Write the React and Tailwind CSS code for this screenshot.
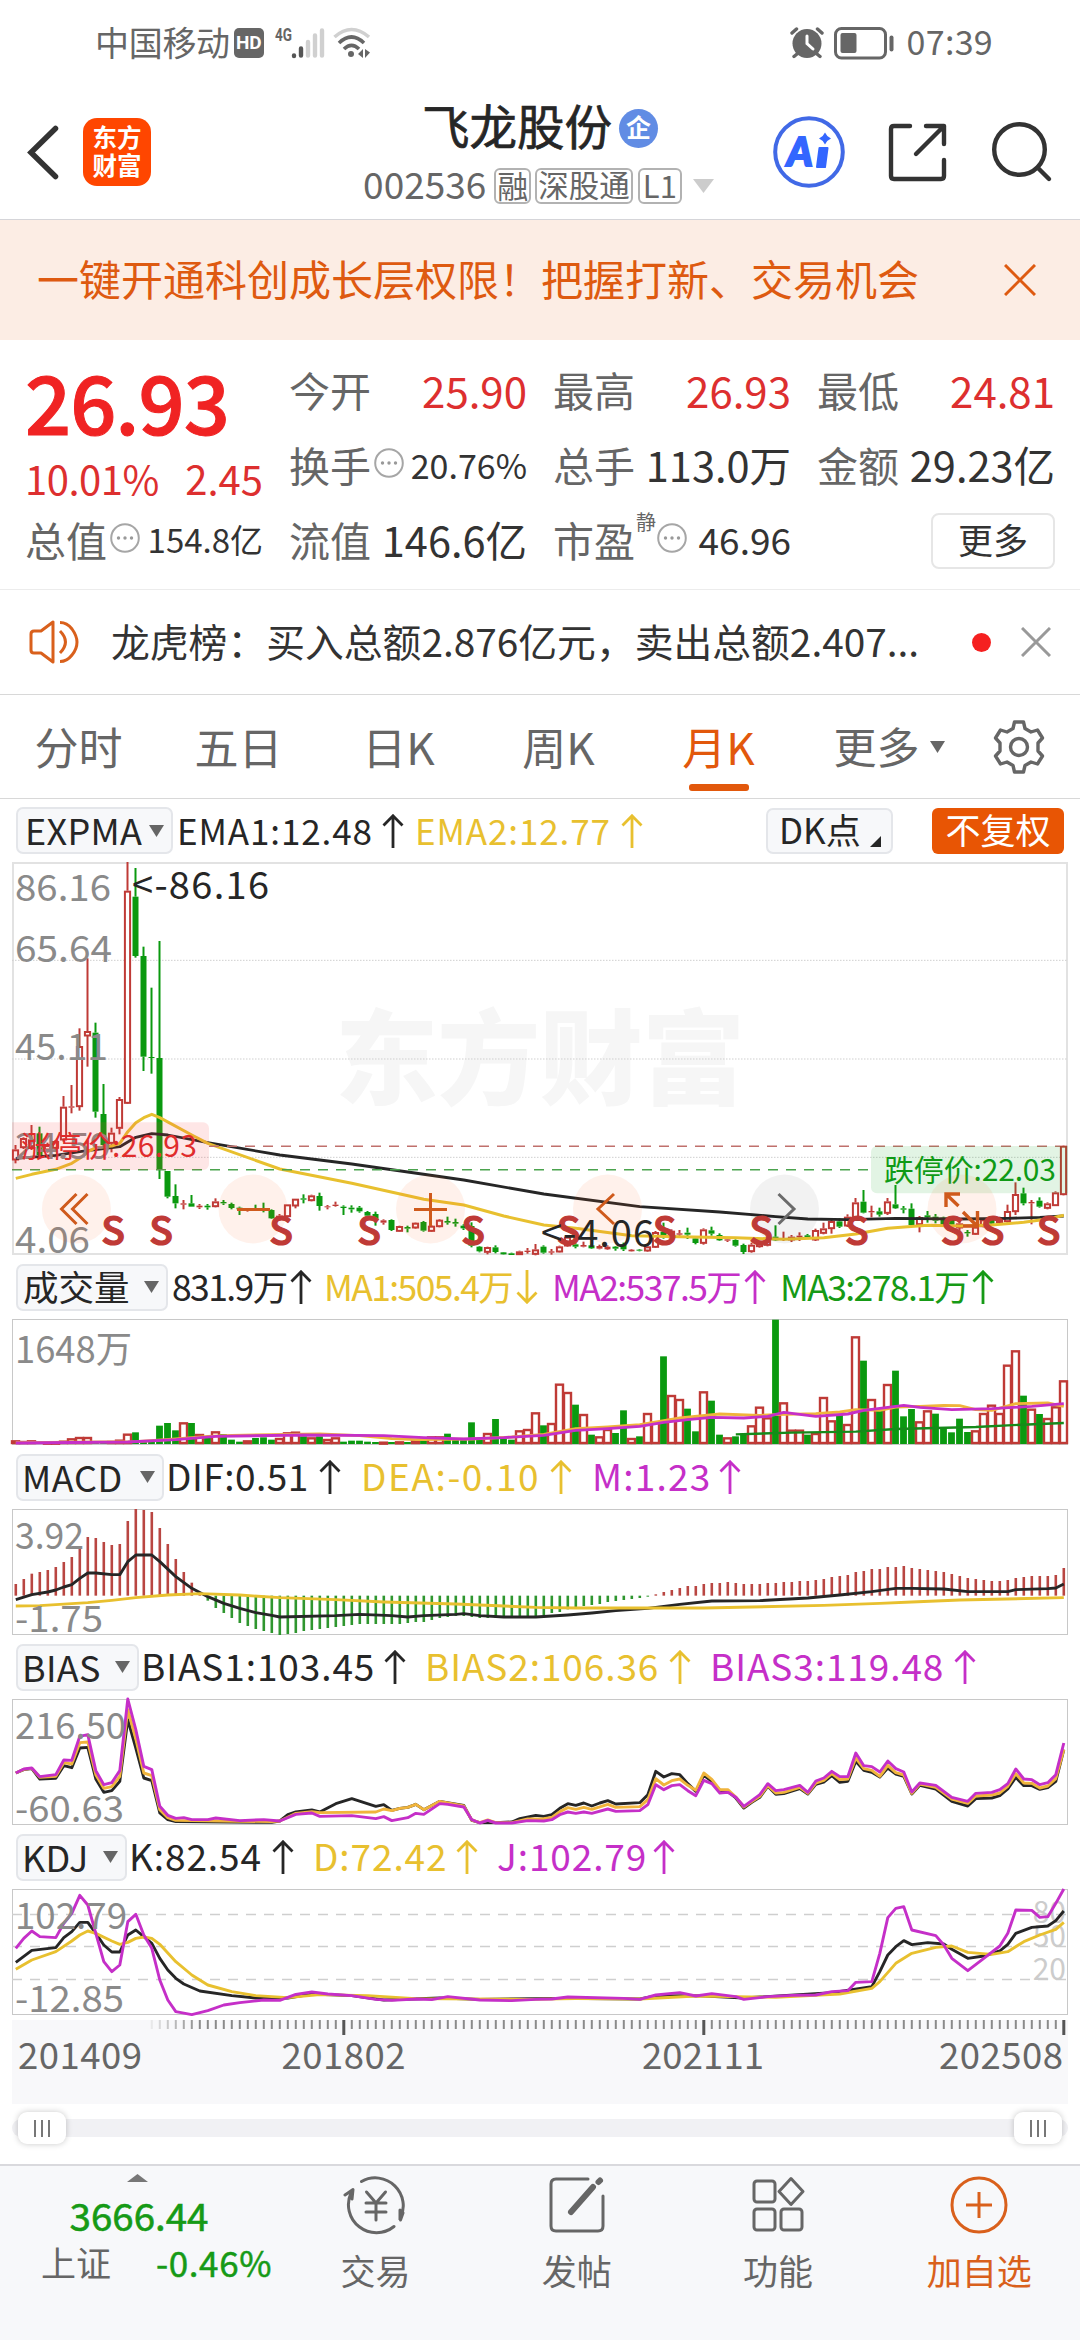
import { useState } from "react";

const MONTHS = 132;
const px = (i) => 15.8 + i * 8;
// series values are kept in third-of-a-pixel steps, measured from the panel offset
const from = (top) => (v) => (v - top) / 3;

const RED = "#bf3a36";
const GREEN = "#0a990f";
const GOLD = "#e8c02f";
const INK = "#262626";
const PINK = "#c52fc8";

// [up, high, bodyTop, bodyBottom, low]
const CANDLES = [
  [1, 885, 898, 930, 940], [1, 862, 864, 893, 897], [1, 825, 868, 890, 900], [0, 830, 850, 915, 918],
  [1, 878, 885, 900, 908], [1, 870, 873, 895, 900], [1, 738, 770, 870, 875], [1, 705, 769, 773, 790],
  [1, 535, 588, 770, 782], [1, 325, 543, 558, 650], [0, 518, 548, 785, 803], [0, 702, 792, 885, 890],
  [1, 833, 848, 880, 907], [1, 741, 747, 835, 853], [1, 36, 122, 760, 762], [0, 54, 140, 318, 323],
  [0, 290, 318, 620, 663], [0, 413, 621, 624, 671], [0, 273, 624, 958, 987], [0, 963, 963, 1040, 1045],
  [0, 1003, 1038, 1060, 1075], [1, 1050, 1060, 1064, 1078], [0, 1035, 1060, 1070, 1070], [1, 1062, 1067, 1072, 1077],
  [0, 1062, 1067, 1072, 1079], [1, 1045, 1054, 1070, 1072], [0, 1050, 1056, 1060, 1065], [0, 1058, 1062, 1074, 1078],
  [0, 1070, 1073, 1078, 1095], [1, 1076, 1078, 1082, 1085], [0, 1064, 1076, 1081, 1083], [0, 1058, 1074, 1080, 1087],
  [0, 1078, 1080, 1105, 1107], [1, 1092, 1097, 1108, 1112], [1, 1063, 1063, 1100, 1102], [1, 1046, 1046, 1068, 1075],
  [0, 1033, 1045, 1049, 1060], [1, 1034, 1036, 1052, 1054], [0, 1028, 1038, 1068, 1082], [1, 1065, 1069, 1072, 1078],
  [1, 1055, 1064, 1068, 1070], [0, 1066, 1070, 1074, 1095], [0, 1066, 1073, 1078, 1088], [0, 1068, 1073, 1084, 1088],
  [0, 1083, 1086, 1097, 1099], [0, 1085, 1092, 1110, 1127], [1, 1108, 1111, 1118, 1124], [0, 1108, 1110, 1140, 1143],
  [1, 1127, 1128, 1144, 1145], [0, 1127, 1131, 1136, 1147], [1, 1117, 1118, 1134, 1136], [0, 1113, 1116, 1142, 1145],
  [1, 1125, 1127, 1144, 1146], [1, 1107, 1109, 1130, 1132], [0, 1100, 1113, 1118, 1124], [0, 1106, 1116, 1121, 1130],
  [0, 1123, 1127, 1135, 1140], [0, 1117, 1128, 1187, 1192], [0, 1188, 1190, 1204, 1207], [1, 1190, 1191, 1207, 1213],
  [0, 1186, 1192, 1206, 1210], [0, 1206, 1207, 1213, 1214], [0, 1208, 1210, 1215, 1215], [1, 1202, 1204, 1214, 1215],
  [1, 1194, 1202, 1206, 1211], [1, 1182, 1198, 1213, 1216], [0, 1186, 1190, 1208, 1211], [1, 1197, 1204, 1208, 1214],
  [1, 1187, 1189, 1206, 1207], [1, 1155, 1160, 1188, 1190], [0, 1178, 1183, 1190, 1195], [1, 1175, 1185, 1190, 1192],
  [0, 1183, 1186, 1195, 1197], [1, 1184, 1188, 1196, 1198], [1, 1186, 1190, 1198, 1200], [0, 1188, 1190, 1196, 1202],
  [0, 1178, 1183, 1198, 1203], [1, 1197, 1199, 1204, 1205], [0, 1197, 1199, 1202, 1204], [1, 1186, 1189, 1203, 1205],
  [1, 1143, 1146, 1192, 1194], [0, 1118, 1145, 1162, 1166], [1, 1138, 1142, 1163, 1165], [1, 1140, 1150, 1154, 1162],
  [0, 1133, 1148, 1154, 1167], [0, 1160, 1165, 1179, 1183], [1, 1135, 1138, 1180, 1184], [0, 1130, 1141, 1151, 1157],
  [0, 1150, 1155, 1171, 1173], [1, 1165, 1168, 1172, 1176], [0, 1168, 1170, 1187, 1190], [0, 1181, 1185, 1206, 1212],
  [1, 1178, 1184, 1205, 1208], [1, 1174, 1178, 1190, 1193], [1, 1163, 1166, 1186, 1189], [0, 1126, 1160, 1171, 1173],
  [1, 1145, 1166, 1170, 1173], [1, 1155, 1160, 1170, 1176], [1, 1147, 1157, 1162, 1173], [0, 1152, 1156, 1163, 1166],
  [1, 1136, 1140, 1170, 1173], [1, 1118, 1135, 1150, 1153], [1, 1110, 1113, 1136, 1151], [0, 1105, 1114, 1130, 1134],
  [1, 1093, 1100, 1128, 1131], [1, 1044, 1057, 1107, 1109], [0, 1020, 1055, 1088, 1090], [1, 1067, 1083, 1087, 1102],
  [0, 1073, 1084, 1094, 1100], [1, 1044, 1054, 1090, 1095], [0, 1005, 1063, 1075, 1077], [0, 1068, 1075, 1079, 1090],
  [0, 1060, 1076, 1125, 1128], [1, 1098, 1101, 1124, 1147], [0, 1083, 1096, 1102, 1118], [0, 1092, 1100, 1112, 1120],
  [0, 1100, 1103, 1124, 1130], [0, 1105, 1110, 1124, 1128], [1, 1110, 1120, 1134, 1142], [0, 1140, 1146, 1150, 1160],
  [1, 1118, 1130, 1153, 1155], [1, 1104, 1108, 1130, 1132], [0, 1103, 1105, 1121, 1125], [1, 1100, 1106, 1118, 1120],
  [1, 1064, 1083, 1115, 1118], [1, 997, 1032, 1085, 1095], [0, 1013, 1030, 1060, 1066], [1, 1050, 1056, 1060, 1123],
  [0, 1042, 1052, 1070, 1073], [1, 1057, 1060, 1075, 1078], [1, 1024, 1027, 1067, 1068], [1, 886, 887, 1034, 1036],
];

// bar tops, negative for a falling month
const VOLUME = [
  542, 544, 542, -546, 546, 546, 543, 536, 532, 532, -545, -546, 544, 540, 522, -518, -542, -545, -498, -490,
  -512, 488, -490, 523, -533, 515, -523, -540, -546, 542, -535, -533, -540, 535, 518, 516, -530, 533, -530, 538,
  533, -546, -543, -543, -546, -547, 546, -547, 545, -547, 540, -543, 530, 530, -522, -540, -540, -488, -540, 520,
  -478, -535, -540, 512, 508, 458, -497, 490, 372, 397, -435, 463, -525, 530, 508, -520, -452, 535, -530, 460,
  487, -290, 406, 418, -447, -515, 395, -423, -525, 533, -530, -522, 497, 441, 473, -180, 428, 510, 510, -525,
  520, 412, 482, -465, 493, 230, -303, 418, -450, 373, -333, -470, -448, 485, 452, -462, -503, -518, -477, -517,
  512, 460, 435, 460, 315, 272, -408, 447, -463, 475, 440, 362,
];

// histogram tips around the 1007 zero line
const MACD = [
  972, 957, 941, 936, 930, 921, 906, 891, 866, 831, 834, 846, 855, 852, 783, 747, 750, 756, 804, 852,
  897, 936, 968, 1000, 1022, 1044, 1059, 1074, 1089, 1098, 1107, 1113, 1119, 1125, 1122, 1119, 1113, 1110, 1107, 1104,
  1101, 1098, 1095, 1092, 1092, 1092, 1092, 1092, 1092, 1089, 1086, 1086, 1080, 1074, 1071, 1068, 1068, 1071, 1074, 1074,
  1074, 1074, 1074, 1074, 1074, 1074, 1065, 1059, 1056, 1048, 1041, 1038, 1035, 1032, 1026, 1023, 1020, 1017, 1014, 1010,
  1003, 996, 990, 984, 978, 978, 972, 969, 969, 966, 969, 972, 972, 972, 969, 969, 966, 966, 963, 963,
  960, 957, 951, 948, 945, 936, 933, 927, 927, 921, 921, 918, 924, 927, 930, 933, 936, 942, 948, 954,
  957, 960, 963, 963, 960, 954, 951, 948, 948, 948, 945, 924,
];

const EMA1 = [[0, 925], [5, 916], [8, 905], [13, 890], [15, 862], [17, 851], [19, 855], [24, 878], [33, 915], [42, 942], [56, 990], [66, 1032], [78, 1070], [88, 1086], [95, 1100], [99, 1107], [104, 1109], [110, 1105], [118, 1107], [124, 1105], [128, 1102], [131, 1098]];
const EMA2 = [[0, 985], [2, 973], [5, 958], [7, 940], [8, 925], [9, 905], [10, 893], [12, 888], [13, 880], [14, 845], [15, 818], [16, 803], [17, 793], [18, 803], [22, 855], [24, 880], [33, 957], [42, 1000], [51, 1048], [56, 1065], [61, 1098], [66, 1125], [70, 1135], [77, 1157], [83, 1160], [90, 1163], [96, 1168], [101, 1163], [105, 1152], [109, 1135], [114, 1126], [118, 1128], [122, 1125], [126, 1117], [129, 1107], [131, 1096]];

const VMA1 = [[0, 549], [15, 546], [20, 538], [24, 530], [27, 527], [38, 523], [43, 528], [47, 537], [50, 540], [57, 538], [62, 532], [66, 524], [70, 507], [74, 502], [78, 495], [81, 483], [83, 475], [88, 463], [93, 467], [95, 465], [100, 462], [103, 457], [105, 450], [108, 452], [110, 442], [113, 440], [116, 437], [118, 438], [120, 450], [122, 452], [125, 432], [129, 430], [131, 440]];
const VMA2 = [[0, 550], [14, 547], [20, 540], [25, 530], [36, 526], [46, 528], [51, 534], [56, 538], [61, 534], [66, 527], [70, 512], [74, 507], [78, 500], [81, 488], [84, 480], [87, 473], [91, 475], [94, 470], [96, 458], [100, 470], [104, 463], [106, 452], [111, 437], [113, 443], [117, 450], [122, 447], [127, 440], [131, 432]];
const VMA3 = [[90, 524], [97, 519], [105, 516], [110, 508], [115, 505], [120, 502], [124, 497], [131, 490]];

const DIF = [[0, 1019], [2, 1004], [4, 996], [5, 990], [6, 981], [7, 974], [8, 955], [9, 939], [10, 939], [12, 944], [13, 944], [14, 905], [15, 885], [17, 885], [18, 905], [20, 950], [22, 985], [24, 1010], [26, 1030], [28, 1045], [30, 1058], [32, 1066], [33, 1071], [40, 1067], [43, 1063], [47, 1067], [49, 1071], [51, 1067], [55, 1063], [56, 1061], [58, 1067], [61, 1071], [65, 1071], [69, 1065], [72, 1059], [75, 1052], [79, 1045], [83, 1033], [87, 1023], [93, 1022], [99, 1014], [103, 1005], [107, 995], [110, 985], [112, 985], [116, 987], [119, 995], [124, 995], [125, 989], [129, 986], [130, 984], [131, 972]];
const DEA = [[0, 1038], [3, 1037], [5, 1034], [9, 1028], [12, 1021], [15, 1013], [19, 1005], [23, 1001], [28, 1005], [33, 1013], [40, 1019], [46, 1026], [55, 1032], [65, 1042], [70, 1044], [86, 1044], [92, 1041], [101, 1036], [108, 1030], [112, 1026], [118, 1020], [131, 1013]];

const BIAS1 = [[0, 400], [1, 390], [2, 387], [3, 418], [5, 416], [6, 378], [7, 384], [8, 325], [9, 323], [10, 418], [11, 458], [12, 453], [13, 425], [14, 240], [15, 325], [16, 415], [17, 423], [18, 520], [19, 540], [20, 546], [32, 548], [33, 544], [34, 525], [35, 517], [37, 511], [38, 517], [40, 492], [42, 477], [45, 500], [46, 495], [47, 512], [48, 506], [49, 503], [50, 494], [51, 510], [53, 485], [56, 497], [57, 542], [58, 549], [60, 549], [62, 547], [63, 537], [65, 527], [66, 530], [67, 525], [68, 506], [69, 492], [70, 497], [71, 490], [72, 499], [73, 490], [74, 483], [75, 493], [78, 489], [79, 465], [80, 395], [81, 412], [82, 402], [83, 405], [84, 432], [85, 455], [86, 407], [87, 425], [88, 452], [89, 455], [90, 475], [91, 505], [92, 488], [93, 473], [94, 440], [95, 464], [96, 462], [98, 447], [99, 463], [100, 434], [101, 427], [102, 408], [103, 428], [104, 425], [105, 365], [106, 392], [107, 398], [108, 412], [109, 385], [110, 403], [111, 410], [112, 463], [113, 437], [115, 448], [117, 485], [119, 499], [120, 477], [122, 475], [123, 468], [124, 448], [125, 413], [126, 438], [127, 438], [128, 449], [129, 444], [130, 425], [131, 330]];
const BIAS2 = [[0, 400], [1, 389], [2, 386], [3, 413], [5, 410], [6, 369], [7, 373], [8, 309], [9, 307], [10, 405], [11, 446], [12, 441], [13, 410], [14, 210], [15, 298], [16, 400], [17, 408], [18, 510], [19, 534], [20, 542], [32, 546], [33, 544], [35, 521], [37, 516], [38, 519], [45, 517], [46, 508], [47, 513], [48, 506], [49, 503], [50, 494], [51, 510], [53, 485], [56, 499], [57, 541], [58, 549], [59, 541], [60, 549], [62, 549], [64, 538], [66, 537], [67, 533], [68, 516], [69, 504], [70, 509], [71, 503], [72, 509], [74, 494], [75, 503], [78, 501], [79, 480], [80, 417], [81, 436], [82, 423], [83, 418], [84, 437], [85, 452], [86, 400], [87, 419], [88, 450], [89, 450], [90, 472], [91, 502], [92, 486], [93, 470], [94, 438], [95, 460], [96, 458], [98, 443], [99, 461], [100, 430], [101, 422], [102, 402], [103, 420], [104, 418], [105, 355], [106, 387], [107, 392], [108, 410], [109, 377], [110, 399], [111, 406], [112, 461], [113, 433], [115, 443], [117, 478], [119, 491], [120, 469], [122, 466], [123, 460], [124, 440], [125, 402], [126, 430], [127, 431], [128, 445], [129, 439], [130, 417], [131, 330]];
const BIAS3 = [[0, 400], [1, 388], [2, 385], [3, 411], [5, 405], [6, 361], [7, 362], [8, 290], [9, 285], [10, 393], [11, 435], [12, 429], [13, 393], [14, 178], [15, 270], [16, 380], [17, 390], [18, 500], [19, 527], [20, 536], [21, 534], [22, 540], [24, 540], [25, 535], [28, 543], [31, 540], [33, 544], [35, 524], [37, 520], [38, 530], [42, 528], [45, 537], [46, 531], [47, 543], [49, 534], [50, 521], [51, 524], [53, 492], [54, 494], [56, 502], [57, 540], [58, 550], [59, 542], [60, 550], [62, 550], [64, 543], [66, 544], [67, 540], [68, 525], [69, 517], [70, 521], [71, 517], [72, 521], [74, 508], [75, 515], [78, 513], [79, 495], [80, 435], [81, 450], [82, 438], [83, 435], [84, 453], [85, 468], [86, 422], [87, 432], [88, 460], [89, 458], [90, 473], [91, 500], [93, 465], [94, 432], [95, 453], [96, 450], [98, 437], [99, 458], [100, 424], [101, 415], [102, 395], [103, 411], [104, 411], [105, 340], [106, 378], [107, 381], [108, 397], [109, 364], [110, 387], [111, 397], [112, 457], [113, 430], [115, 437], [117, 473], [119, 485], [120, 461], [122, 458], [123, 450], [124, 432], [125, 388], [126, 418], [127, 420], [128, 435], [129, 429], [130, 405], [131, 310]];

const K = [[0, 967], [2, 931], [5, 923], [6, 893], [7, 875], [8, 847], [9, 847], [10, 880], [11, 915], [12, 936], [13, 936], [14, 885], [15, 870], [16, 890], [17, 910], [18, 955], [19, 990], [20, 1015], [21, 1032], [23, 1053], [27, 1067], [30, 1074], [34, 1074], [37, 1062], [42, 1067], [46, 1080], [53, 1074], [58, 1078], [68, 1075], [78, 1077], [80, 1068], [85, 1067], [91, 1074], [102, 1058], [107, 1040], [108, 995], [109, 945], [110, 920], [111, 902], [112, 914], [114, 908], [116, 912], [117, 928], [119, 955], [121, 948], [123, 933], [124, 913], [125, 880], [127, 862], [129, 858], [130, 842], [131, 813]];
const D = [[0, 988], [2, 960], [5, 935], [7, 903], [8, 885], [9, 873], [10, 880], [12, 903], [13, 913], [14, 907], [15, 895], [16, 891], [17, 895], [18, 913], [20, 965], [22, 1005], [24, 1035], [27, 1055], [30, 1067], [34, 1073], [38, 1064], [44, 1067], [50, 1076], [64, 1078], [70, 1076], [78, 1077], [85, 1068], [95, 1072], [103, 1062], [107, 1045], [108, 1025], [110, 970], [112, 940], [115, 922], [117, 918], [119, 937], [122, 943], [124, 935], [126, 905], [128, 885], [130, 868], [131, 847]];
const J = [[0, 925], [1, 895], [2, 873], [3, 890], [5, 893], [6, 850], [7, 820], [8, 766], [9, 795], [10, 880], [11, 965], [12, 995], [13, 975], [14, 845], [15, 823], [16, 885], [17, 925], [18, 1020], [19, 1080], [20, 1115], [22, 1124], [24, 1112], [26, 1095], [28, 1088], [31, 1080], [33, 1081], [35, 1063], [37, 1056], [39, 1062], [42, 1067], [45, 1078], [47, 1081], [50, 1077], [52, 1079], [54, 1070], [58, 1080], [62, 1082], [65, 1078], [67, 1077], [69, 1071], [76, 1075], [78, 1078], [80, 1065], [83, 1058], [85, 1068], [87, 1061], [90, 1070], [91, 1078], [94, 1070], [97, 1066], [100, 1065], [102, 1055], [104, 1052], [105, 1027], [107, 1025], [108, 940], [109, 833], [110, 805], [111, 800], [112, 870], [115, 887], [116, 915], [117, 955], [119, 992], [121, 955], [123, 918], [124, 880], [125, 810], [127, 811], [128, 832], [129, 830], [130, 790], [131, 747]];

const SELL_MARKS = [113, 161, 281, 369, 473, 568.6, 664.7, 761, 856.8, 952.5, 992.5, 1048.6];

function Line({ data, y, color, width = 2.9 }) {
  return (
    <polyline
      points={data.map(([i, v]) => `${px(i)},${y(v)}`).join(" ")}
      fill="none"
      stroke={color}
      strokeWidth={width}
      strokeLinejoin="round"
    />
  );
}

function Panel({ height, border = "#c8c8c8", children }) {
  return (
    <svg viewBox={`12 0 1056 ${height}`} width="1056" height={height} className="block overflow-visible">
      <rect x="12.5" y="0.5" width="1055" height={height - 1} fill="none" stroke={border} />
      {children}
    </svg>
  );
}

function AxisText({ y, children, width }) {
  return (
    <text x="15" y={y} fontSize="37" fill="#8a8a8a" textLength={width} lengthAdjust="spacingAndGlyphs">
      {children}
    </text>
  );
}

function PriceChart() {
  const y = from(36);
  return (
    <Panel height={393} border="#dedede">
      <rect x="13" y="1" width="1054" height="391" fill="none" stroke="#e2e2e2" strokeWidth="2" />
      <text x="335" y="235" fontSize="103" fontWeight="900" fill="#f6f6f6" textLength="410">东方财富</text>
      {[331, 627, 922].map((v) => (
        <line key={v} x1="12" x2="1068" y1={y(v)} y2={y(v)} stroke="#cfcfcf" strokeDasharray="1.5 1.5" />
      ))}
      {CANDLES.map(([up, hi, top, bot, lo], i) => {
        const x = px(i) - 0.3;
        const color = up ? RED : GREEN;
        const h = Math.max(y(bot) - y(top), 1);
        return (
          <g key={i} stroke={color}>
            <line x1={x} x2={x} y1={y(hi)} y2={y(top)} strokeWidth="2" />
            <line x1={x} x2={x} y1={y(bot)} y2={y(lo)} strokeWidth="2" />
            {up && h > 3 ? (
              <rect x={x - 2.6} y={y(top) + 1} width="5.2" height={h - 1.5} fill="#fff" strokeWidth="2" />
            ) : (
              <rect x={x - 3} y={y(top)} width="6" height={h} fill={color} stroke="none" />
            )}
          </g>
        );
      })}
      <Line data={EMA1} y={y} color={INK} width={2.8} />
      <Line data={EMA2} y={y} color={GOLD} width={3} />
      <line x1="209" x2="1060" y1={y(889)} y2={y(889)} stroke="#c0706c" strokeWidth="1.5" strokeDasharray="10 8" />
      <line x1="12" x2="871" y1={y(959)} y2={y(959)} stroke="#4ba34e" strokeWidth="1.5" strokeDasharray="10 8" />

      <AxisText y={y(153)} width="96">86.16</AxisText>
      <AxisText y={y(337)} width="97">65.64</AxisText>
      <AxisText y={y(631)} width="93">45.11</AxisText>
      <AxisText y={y(926)} width="96">24.59</AxisText>
      <AxisText y={y(1210)} width="75">4.06</AxisText>

      <path d={`M12 ${y(817)} H203 a6 6 0 0 1 6 6 V${y(942)} a6 6 0 0 1 -6 6 H12 Z`} fill="rgba(245,60,60,0.13)" />
      <text x="21" y={y(922)} fontSize="30" fill="#e02c2c" textLength="176">涨停价:26.93</text>
      <path d={`M1068 ${y(888)} H877 a6 6 0 0 0 -6 6 V${y(1012)} a6 6 0 0 0 6 6 H1068 Z`} fill="rgba(20,165,30,0.12)" />
      <text x="884" y={y(992)} fontSize="30" fill="#0f9a16" textLength="172">跌停价:22.03</text>
      <text x="132" y={y(148)} fontSize="38" fill={INK} textLength="137">&lt;-86.16</text>

      {[76.4, 253, 430.5, 607.5, 784.5, 962].map((x) => (
        <circle key={x} cx={x} cy={y(1077)} r="34.5" fill={x === 784.5 ? "rgba(0,0,0,0.05)" : "rgba(250,100,30,0.09)"} />
      ))}
      <g fill="none" stroke="#cf5a1c" strokeWidth="3">
        <path d="M76.5 332 L61.5 347 L76.5 362 M87.5 332 L72.5 347 L87.5 362" />
        <path d="M237 347.5 H270 M414 347.5 H447 M430.5 331 V364" />
        <path d="M614 332 L598 347 L614 362" />
        <path d="M946 345 V332 H960 M947 333 L958.500 344 M963 350 L976 363 M977.500 349 V364 H963" strokeWidth="3.400" />
      </g>
      <path d="M778.500 332 L794 347 L778.500 362" fill="none" stroke="#6b6b6b" strokeWidth="3" />

      {SELL_MARKS.map((x) => (
        <text key={x} x={x} y={y(1185)} fontSize="39" fontWeight="500" fill={RED} stroke={RED} strokeWidth="1.2" textAnchor="middle">
          S
        </text>
      ))}
      <text x="541" y={y(1192)} fontSize="38" fill={INK} textLength="113">&lt;-4.06</text>
    </Panel>
  );
}

function VolumeChart() {
  const y = from(178);
  return (
    <Panel height={126}>
      {VOLUME.map((v, i) => {
        const x = px(i) - 0.3;
        const top = y(Math.abs(v));
        if (v < 0) return <rect key={i} x={x - 3.4} y={top} width="6.8" height={125 - top} fill={GREEN} />;
        return (
          <rect key={i} x={x - 3.5} y={top + 1} width="7" height={Math.max(123 - top, 1)} fill="#fff" stroke={RED} strokeWidth="2.4" />
        );
      })}
      <Line data={VMA3} y={y} color="#168a1a" width={2.4} />
      <Line data={VMA1} y={y} color="#f0b43c" />
      <Line data={VMA2} y={y} color={PINK} />
      <AxisText y={y(309)} width="117">1648万</AxisText>
    </Panel>
  );
}

function MacdChart() {
  const y = from(747);
  return (
    <Panel height={126}>
      {MACD.map((v, i) => (
        <line key={i} x1={px(i)} x2={px(i)} y1={y(1007)} y2={y(v)} stroke={v < 1007 ? "#b94642" : "#2f962f"} strokeWidth="2.6" />
      ))}
      <Line data={DIF} y={y} color={INK} />
      <Line data={DEA} y={y} color={GOLD} />
      <AxisText y={y(867)} width="69">3.92</AxisText>
      <AxisText y={y(1116)} width="88">-1.75</AxisText>
    </Panel>
  );
}

function BiasChart() {
  const y = from(178);
  return (
    <Panel height={126}>
      <Line data={BIAS1} y={y} color={INK} />
      <Line data={BIAS2} y={y} color="#f0b43c" />
      <Line data={BIAS3} y={y} color={PINK} />
      <AxisText y={y(298)} width="111">216.50</AxisText>
      <AxisText y={y(547)} width="109">-60.63</AxisText>
    </Panel>
  );
}

function KdjChart() {
  const y = from(747);
  return (
    <Panel height={126}>
      {[821, 919, 1018].map((v) => (
        <line key={v} x1="12" x2="1068" y1={Math.round(y(v)) + 0.5} y2={Math.round(y(v)) + 0.5} stroke="#cfcfcf" strokeWidth="1.4" strokeDasharray="10 8" />
      ))}
      {[["80", 850], ["50", 922], ["20", 1019]].map(([t, v]) => (
        <text key={t} x="1066" y={y(v)} fontSize="30" fill="#cccccc" textAnchor="end">{t}</text>
      ))}
      <Line data={K} y={y} color={INK} />
      <Line data={D} y={y} color={GOLD} />
      <Line data={J} y={y} color={PINK} />
      <AxisText y={y(867)} width="112">102.79</AxisText>
      <AxisText y={y(1116)} width="109">-12.85</AxisText>
    </Panel>
  );
}

function Arrow({ down }) {
  return (
    <svg width="22" height="34" viewBox="0 0 22 34" className={down ? "shrink-0 rotate-180" : "shrink-0"} fill="none" stroke="currentColor" strokeWidth="2.8">
      <path d="M11 34 V2 M1.500 11.500 L11 1.800 L20.500 11.500" />
    </svg>
  );
}

function Triangle({ className }) {
  return (
    <svg width="15" height="12" viewBox="0 0 15 12" preserveAspectRatio="none" className={className} fill="currentColor">
      <path d="M0 0 H15 L7.500 12 Z" />
    </svg>
  );
}

function IndicatorPicker({ label, className }) {
  return (
    <button className={`flex h-[47px] shrink-0 items-center justify-between rounded-[7px] border-2 border-[#e4e6ea] bg-[#f7f8fa] text-[#262626] ${className}`}>
      <span className="mb-[3px]">{label}</span>
      <Triangle className="shrink-0 text-[#666666]" />
    </button>
  );
}

// one reading; the width class covers the text up to its arrow
function Reading({ text, className, down }) {
  return (
    <span className={`flex shrink-0 items-center justify-between whitespace-nowrap ${className}`}>
      <span className="mb-[3px]">{text}</span>
      <Arrow down={down} />
    </span>
  );
}

function ReadingRow({ children }) {
  return <div className="flex h-[64px] items-center pl-[16px] text-[37px] leading-none">{children}</div>;
}

function StatusBar() {
  return (
    <div className="flex h-[88px] items-center pt-px pr-[87px] pb-[3px] pl-[95px] text-[#666666]">
      <span className="mb-[3px] text-[34px] leading-none tracking-[-0.3px]">中国移动</span>
      <span className="ml-[4px] flex h-[30px] w-[30px] items-center justify-center rounded-[5px] bg-[#666666] font-['Roboto'] text-[19px] font-bold text-white">
        HD
      </span>
      <svg width="50" height="34" viewBox="0 0 50 34" className="ml-[10px] overflow-visible">
        <text x="1" y="15" fontSize="18" fontWeight="700" textLength="17" lengthAdjust="spacingAndGlyphs" fill="#666666" fontFamily="Roboto">4G</text>
        <g strokeWidth="4.400" strokeLinecap="round">
          <path d="M20 30 V29.500 M27 29.500 V22.500" stroke="#555555" />
          <path d="M34 29.500 V16 M41 29.500 V9.500 M48 29.500 V4.500" stroke="#d0d0d0" />
        </g>
      </svg>
      <svg width="40" height="34" viewBox="0 0 40 34" className="ml-[9px]" fill="none" strokeWidth="3.600">
        <path d="M1.500 11 Q18.500 -4 36 11" stroke="#d0d0d0" />
        <path d="M6 17 Q18.500 5 31 17 M11 23 Q18.500 15.500 26 23" stroke="#666666" />
        <circle cx="18" cy="28" r="3" fill="#666666" />
        <path d="M25 28 L30 23 V32 Z M32 23 V32 L37 26.500 Z" fill="#666666" />
      </svg>
      <div className="ml-auto flex items-center">
        <svg width="34" height="34" viewBox="0 0 34 34" fill="none" strokeLinecap="round">
          <circle cx="17" cy="17.500" r="14.500" fill="#666666" />
          <path d="M2 7 L6.500 3 M32 7 L27.500 3 M4 30.500 L7 28 M30 30.500 L27 28" stroke="#666666" strokeWidth="3.400" />
          <path d="M17 10 V17.500 L23 23" stroke="#fff" strokeWidth="3" />
        </svg>
        <svg width="62" height="34" viewBox="0 0 62 34" className="ml-[10px]" fill="none" stroke="#666666">
          <rect x="1.500" y="2.500" width="50" height="29.500" rx="6" strokeWidth="3" />
          <rect x="6.500" y="7" width="16" height="20" rx="2" fill="#666666" stroke="none" />
          <path d="M57.500 11.500 V23.500" strokeWidth="4" strokeLinecap="round" />
        </svg>
        <span className="mb-[4px] ml-[11px] text-[34px] leading-none tracking-[0.3px]">07:39</span>
      </div>
    </div>
  );
}

function Header() {
  return (
    <div className="flex h-[132px] border-b border-[#d5d5d9]">
      <div className="flex w-[240px] items-start pt-[30px] pl-[26px]">
        <svg width="34" height="58" viewBox="0 0 34 58" className="mt-[5px]" fill="none" stroke="#333333" strokeWidth="5.500" strokeLinecap="round">
          <path d="M29.500 5.500 L5 29.500 L29.500 53.500" />
        </svg>
        <div className="ml-[23px] flex h-[68px] w-[68px] flex-col items-center justify-center rounded-[14px] bg-[#ff4600] pb-[3px] text-[24.500px] leading-[28px] font-bold text-white">
          <span>东方</span>
          <span>财富</span>
        </div>
      </div>
      <div className="flex w-[600px] flex-col items-center">
        <div className="mt-[17px] flex h-[46px] items-center">
          <span className="mb-[6px] text-[47.500px] leading-none text-[#262626] [-webkit-text-stroke:0.7px_#262626]">飞龙股份</span>
          <span className="ml-[7px] flex h-[39px] w-[39px] items-center justify-center rounded-full bg-[#618ce4] pb-[3px] text-[25px] leading-none font-bold text-white">
            企
          </span>
        </div>
        <div className="mt-[15px] flex h-[40px] items-center pr-[3px] text-[#666666]">
          <span className="mb-[5px] text-[37px] leading-none">002536</span>
          <span className="ml-[8px] flex h-[36px] items-center rounded-[6px] border-2 border-[#b2b2b2] px-[1px] pb-[3px] text-[31px] leading-none">融</span>
          <span className="ml-[4px] flex h-[36px] items-center rounded-[6px] border-2 border-[#b2b2b2] px-px pb-[3px] text-[30.500px] leading-none">深股通</span>
          <span className="ml-[5px] flex h-[36px] items-center rounded-[6px] border-2 border-[#b2b2b2] px-[3px] pb-[3px] text-[31px] leading-none">L1</span>
          <Triangle className="ml-[11px] h-[14px] w-[21px] text-[#cccccc]" />
        </div>
      </div>
      <div className="flex flex-1 items-start pt-[29px]">
        <svg width="240" height="72" viewBox="770 117 240 72" className="ml-[-70px] w-[280px]" overflow="visible">
          <g transform="translate(-19 0)">
            <circle cx="808" cy="152" r="33.800" fill="none" stroke="#4169e6" strokeWidth="4" />
            <text x="786" y="165.500" fontFamily="Lato" fontWeight="900" fontStyle="italic" fontSize="39" fill="#3366ff" stroke="#3366ff" strokeWidth="2">A</text>
            <path d="M818.500 148 h8 l-2.500 19 h-8 z" fill="#3366ff" stroke="#3366ff" strokeWidth="2" strokeLinejoin="round" />
            <path d="M824 132.500 q1.800 4.200 6 6 q-4.200 1.800 -6 6 q-1.800 -4.200 -6 -6 q4.200 -1.800 6 -6z" fill="#3366ff" />
            <g fill="none" stroke="#333333" strokeWidth="4.400" strokeLinecap="round" strokeLinejoin="round">
              <path d="M909 126 H893 Q890 126 890 129 V176 Q890 179 893 179 H940 Q943 179 943 176 V160 M925 126 H943 V144 M943 126 L915 154" />
              <circle cx="1018.500" cy="149.500" r="25.300" />
              <path d="M1037 168 L1048 179" />
            </g>
          </g>
        </svg>
      </div>
    </div>
  );
}

function Banner() {
  return (
    <div className="flex h-[120px] items-center justify-between bg-[#fcede4] pr-[44px] pb-px pl-[37px] text-[#de5a10]">
      <span className="mb-[3px] text-[42px] leading-none">一键开通科创成长层权限！把握打新、交易机会</span>
      <svg width="32" height="32" viewBox="0 0 32 32" stroke="currentColor" strokeWidth="3">
        <path d="M1 1 L31 31 M31 1 L1 31" />
      </svg>
    </div>
  );
}

function Dots() {
  return (
    <svg width="30" height="30" viewBox="0 0 30 30" className="mb-[4px] ml-[3px] shrink-0" fill="#999999">
      <circle cx="15" cy="15" r="13.800" fill="none" stroke="#a6a6a6" strokeWidth="2" />
      <circle cx="8.500" cy="15" r="1.700" />
      <circle cx="15" cy="15" r="1.700" />
      <circle cx="21.500" cy="15" r="1.700" />
    </svg>
  );
}

function Stat({ label, sup, dots, value, className }) {
  return (
    <div className="flex h-[75px] items-center pb-[4px] whitespace-nowrap">
      <span className="text-[41px] leading-none text-[#666666]">{label}</span>
      {sup && <span className="-mr-[2px] mb-[36px] ml-px text-[20px] leading-none text-[#666666]">{sup}</span>}
      {dots && <Dots />}
      <span className={`ml-auto leading-none ${className}`}>{value}</span>
    </div>
  );
}

function Quote() {
  return (
    <div className="grid h-[250px] grid-cols-4 content-start gap-x-[26px] border-b border-[#ececec] px-[25px] pt-[14px]">
      <div className="row-span-2">
        <div className="flex h-[102px] items-center pb-[12px] text-[81px] leading-none font-medium tracking-[-1px] text-[#f02323] [-webkit-text-stroke:1px_#f02323]">
          26.93
        </div>
        <div className="flex h-[48px] items-center justify-between pb-[5px] text-[40px] leading-none text-[#dd2f2f]">
          <span className="tracking-[-0.5px]">10.01%</span>
          <span>2.45</span>
        </div>
      </div>
      <Stat label="今开" value="25.90" className="text-[42px] text-[#dd2f2f]" />
      <Stat label="最高" value="26.93" className="text-[42px] text-[#dd2f2f]" />
      <Stat label="最低" value="24.81" className="text-[42px] text-[#dd2f2f]" />
      <Stat label="换手" dots value="20.76%" className="text-[34px] text-[#333333]" />
      <Stat label="总手" value="113.0万" className="text-[41.500px] text-[#333333]" />
      <Stat label="金额" value="29.23亿" className="text-[41.500px] text-[#333333]" />
      <Stat label="总值" dots value="154.8亿" className="text-[33px] text-[#333333]" />
      <Stat label="流值" value="146.6亿" className="text-[41.500px] text-[#333333]" />
      <Stat label="市盈" sup="静" dots value="46.96" className="text-[37px] text-[#333333]" />
      <div className="flex h-[75px] items-center justify-end pb-[2px]">
        <button className="h-[56px] w-[124px] rounded-[8px] border-2 border-[#e6e6e6] pb-[4px] text-[35px] leading-none text-[#333333]">更多</button>
      </div>
    </div>
  );
}

function News() {
  return (
    <div className="flex h-[105px] items-center border-b border-[#d8d8d8] pr-[29px] pl-[29px]">
      <svg width="52" height="46" viewBox="0 0 52 46" fill="none" stroke="#d9601c" strokeWidth="3" strokeLinejoin="round">
        <path d="M24 3 V43 L12 34 H5 Q2 34 2 31 V15 Q2 12 5 12 H12 Z" />
        <path d="M31 12 Q42 23 31 34 M31 3.500 Q38 3.500 43 10 Q48 17 48 23 Q48 30 43 36 Q38 42.500 31 42.500" />
      </svg>
      <span className="mb-[4px] ml-[30px] text-[38.800px] leading-none whitespace-nowrap text-[#333333]">
        龙虎榜：买入总额2.876亿元，卖出总额2.407...
      </span>
      <span className="ml-auto h-[19px] w-[19px] rounded-full bg-[#f52020]" />
      <svg width="30" height="30" viewBox="0 0 30 30" className="ml-[30px]" stroke="#999999" strokeWidth="3">
        <path d="M1 1 L29 29 M29 1 L1 29" />
      </svg>
    </div>
  );
}

const PERIODS = ["分时", "五日", "日K", "周K", "月K"];

function Tabs() {
  const [active, setActive] = useState("月K");
  return (
    <div className="flex h-[104px] border-b border-[#d8d8d8] text-[44px] leading-none text-[#666666]">
      {PERIODS.map((p) => (
        <button
          key={p}
          onClick={() => setActive(p)}
          className={`flex w-[160px] flex-col items-center pt-[29px] pr-[3px] leading-none ${p === active ? "text-[#e2580c]" : ""}`}
        >
          <span>{p}</span>
          {p === active && <span className="mt-[16px] h-[7px] w-[60px] rounded-[3px] bg-[#e2580c]" />}
        </button>
      ))}
      <button className="flex w-[178px] items-start justify-center pt-[29px] leading-none">
        <span className="text-[43px]">更多</span>
        <Triangle className="mt-[17px] ml-[10px] h-[12px] w-[15px]" />
      </button>
      <svg width="56" height="56" viewBox="0 0 56 56" className="mt-[24px] ml-[13px]" fill="none" stroke="#666666" strokeWidth="3.400" strokeLinejoin="round">
        <path d="M23.500 3 H32.500 L34 9.500 L40 13 L46.500 11 L51.500 19 L47 24 V32 L51.500 37 L46.500 45 L40 43 L34 46.500 L32.500 53 H23.500 L22 46.500 L16 43 L9.500 45 L4.500 37 L9 32 V24 L4.500 19 L9.500 11 L16 13 L22 9.500 Z" />
        <circle cx="28" cy="28" r="8.500" />
      </svg>
    </div>
  );
}

function TimeAxis() {
  return (
    <div className="mx-[12px] mt-[5px] h-[84px] bg-[#f8f8fa]">
      <svg viewBox="12 0 1056 84" width="1056" height="84" className="block">
        {Array.from({ length: MONTHS - 17 }, (_, k) => {
          const i = k + 17;
          const major = i === 41 || i === 86 || i === 131;
          return (
            <line
              key={i}
              x1={px(i)}
              x2={px(i)}
              y1="0"
              y2={major ? 15 : 9}
              stroke={major ? "#555555" : "#8a8a8a"}
              strokeWidth={major ? 3 : 2}
              opacity={Math.min(1, (i - 16) / 7)}
            />
          );
        })}
        <g fontSize="36.500" fill="#666666">
          <text x="18" y="49" textLength="124">201409</text>
          <text x="343.500" y="49" textAnchor="middle" textLength="124">201802</text>
          <text x="703" y="49" textAnchor="middle" textLength="122">202111</text>
          <text x="1063" y="49" textAnchor="end" textLength="124">202508</text>
        </g>
      </svg>
    </div>
  );
}

function Handle() {
  return (
    <div className="flex h-[32px] w-[48px] items-center justify-center gap-[5px] rounded-[9px] bg-white shadow-[0_0_6px_rgba(0,0,0,0.22)]">
      <span className="h-[17px] w-[2px] bg-[#777777]" />
      <span className="h-[17px] w-[2px] bg-[#777777]" />
      <span className="h-[17px] w-[2px] bg-[#777777]" />
    </div>
  );
}

function RangeSlider() {
  return (
    <div className="h-[60px] px-[12px] pt-[15px]">
      <div className="flex h-[18px] items-center justify-between rounded-full bg-[#f1f1f4] px-[6px]">
        <Handle />
        <Handle />
      </div>
    </div>
  );
}

function NavItem({ label, className, children }) {
  return (
    <button className={`flex flex-1 flex-col items-center pt-[8px] ${className}`}>
      <svg width="66" height="62" viewBox="0 0 66 62" fill="none" stroke="currentColor" strokeWidth="3" strokeLinecap="round" strokeLinejoin="round">
        {children}
      </svg>
      <span className="mt-[16px] text-[35px] leading-none">{label}</span>
    </button>
  );
}

function BottomBar() {
  return (
    <div className="flex h-[176px] border-t-2 border-[#d9d9dd] bg-[#f7f8fa]">
      <div className="flex w-[275px] flex-col items-center pt-[8px]">
        <svg width="21" height="8" viewBox="0 0 21 8" fill="#777777">
          <path d="M0 8 L10.500 0 L21 8 Z" />
        </svg>
        <span className="mt-[13px] ml-[3px] text-[38.500px] leading-none text-[#169a16] [-webkit-text-stroke:0.6px_#169a16]">3666.44</span>
        <div className="mt-[10px] ml-[38px] flex w-[231px] items-center justify-between text-[35px] leading-none">
          <span className="text-[#666666]">上证</span>
          <span className="tracking-[0.6px] text-[#169a16] [-webkit-text-stroke:0.5px_#169a16]">-0.46%</span>
        </div>
      </div>
      <NavItem label="交易" className="text-[#666666]">
        <path d="M18.500 7.500 A28 28 0 0 1 57 45 M51 52.500 A28 28 0 0 1 8 19 M2 21 L10 15.500 L9 25 M60 39 L57.500 46 M57 36 V45" />
        <path d="M23.500 18 L33 29 L42.500 18 M33 29 V46 M23 29 H43 M23 38 H43" />
      </NavItem>
      <NavItem label="发帖" className="text-[#666666]">
        <path d="M44 5 H12 Q7 5 7 10 V52 Q7 57 12 57 H54 Q59 57 59 52 V22" />
        <path d="M27 38 L49 13" strokeWidth="6" />
        <path d="M54.500 8 L56 6.500" strokeWidth="6" />
      </NavItem>
      <NavItem label="功能" className="text-[#666666]">
        <rect x="9" y="7" width="21" height="21" rx="3" />
        <path d="M46 4.500 L58 17.500 L46 30.500 L34 17.500 Z" />
        <rect x="9" y="35" width="21" height="21" rx="3" />
        <rect x="36" y="35" width="21" height="21" rx="3" />
      </NavItem>
      <NavItem label="加自选" className="text-[#d9601c]">
        <circle cx="33" cy="31" r="27" />
        <path d="M20 31 H46 M33 18 V44" strokeLinecap="butt" />
      </NavItem>
    </div>
  );
}

export default function App() {
  return (
    <div className="flex h-[2340px] w-[1080px] flex-col overflow-hidden bg-white font-['Noto_Sans_CJK_SC','Noto_Sans',sans-serif]">
      <StatusBar />
      <Header />
      <Banner />
      <Quote />
      <News />
      <Tabs />

      <div className="flex h-[63px] items-center pr-[16px] pl-[16px] text-[35px] leading-none">
        <IndicatorPicker label="EXPMA" className="w-[157px] pr-[7px] pl-[7px] text-[36px] tracking-[0.3px]" />
        <Reading text="EMA1:12.48" className="ml-[4px] w-[227px] tracking-[0.9px] text-[#262626]" />
        <Reading text="EMA2:12.77" className="ml-[11px] w-[228px] tracking-[0.9px] text-[#e8c02f]" />
        <button className="ml-auto flex h-[46px] w-[127px] items-end rounded-[7px] border-2 border-[#e4e6ea] bg-[#f7f8fa] pb-[5px] pl-[11px] leading-none text-[#262626]">
          <span className="mb-px">DK点</span>
          <svg width="11" height="11" viewBox="0 0 11 11" className="ml-[9px]">
            <path d="M11 0 V11 H0 Z" fill="#262626" />
          </svg>
        </button>
        <button className="ml-[39px] h-[46px] w-[132px] rounded-[6px] bg-[#e85504] pb-[4px] leading-none text-white">不复权</button>
      </div>
      <div className="mx-[12px]">
        <PriceChart />
      </div>

      <ReadingRow>
        <IndicatorPicker label="成交量" className="w-[152px] pr-[7px] pl-[5px] text-[35.500px]" />
        <Reading text="831.9万" className="ml-[4px] w-[140px] text-[35.500px] tracking-[-1.600px] text-[#262626]" />
        <Reading text="MA1:505.4万" down className="ml-[12px] w-[214px] text-[35.500px] tracking-[-1.600px] text-[#e8c02f]" />
        <Reading text="MA2:537.5万" className="ml-[14px] w-[214px] text-[35.500px] tracking-[-1.600px] text-[#c52fc8]" />
        <Reading text="MA3:278.1万" className="ml-[14px] w-[214px] text-[35.500px] tracking-[-1.600px] text-[#169a16]" />
      </ReadingRow>
      <div className="mx-[12px]">
        <VolumeChart />
      </div>

      <ReadingRow>
        <IndicatorPicker label="MACD" className="w-[148px] pr-[7px] pl-[4px] text-[36px] tracking-[0.600px]" />
        <Reading text="DIF:0.51" className="ml-[2px] w-[175px] tracking-[0.500px] text-[#262626]" />
        <Reading text="DEA:-0.10" className="ml-[20px] w-[211px] tracking-[1.600px] text-[#e8c02f]" />
        <Reading text="M:1.23" className="ml-[20px] w-[149px] tracking-[1.200px] text-[#c52fc8]" />
      </ReadingRow>
      <div className="mx-[12px]">
        <MacdChart />
      </div>

      <ReadingRow>
        <IndicatorPicker label="BIAS" className="w-[123px] pr-[7px] pl-[4px] text-[36px] tracking-[0.300px]" />
        <Reading text="BIAS1:103.45" className="ml-[2px] w-[265px] tracking-[0.900px] text-[#262626]" />
        <Reading text="BIAS2:106.36" className="ml-[19px] w-[266px] tracking-[0.900px] text-[#e8c02f]" />
        <Reading text="BIAS3:119.48" className="ml-[19px] w-[266px] tracking-[0.900px] text-[#c52fc8]" />
      </ReadingRow>
      <div className="mx-[12px]">
        <BiasChart />
      </div>

      <ReadingRow>
        <IndicatorPicker label="KDJ" className="w-[111px] pr-[7px] pl-[4px] text-[36px] tracking-[0.300px]" />
        <Reading text="K:82.54" className="ml-[2px] w-[165px] tracking-[0.900px] text-[#262626]" />
        <Reading text="D:72.42" className="ml-[19px] w-[165px] tracking-[0.900px] text-[#e8c02f]" />
        <Reading text="J:102.79" className="ml-[19px] w-[178px] tracking-[0.900px] text-[#c52fc8]" />
      </ReadingRow>
      <div className="mx-[12px]">
        <KdjChart />
      </div>

      <TimeAxis />
      <RangeSlider />
      <BottomBar />
    </div>
  );
}
